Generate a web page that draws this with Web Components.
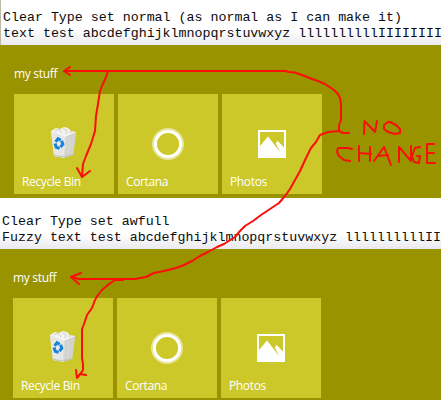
<!DOCTYPE html>
<html lang="en">
<head>
<meta charset="utf-8">
<title>Clear Type comparison</title>
<style>
html, body { margin: 0; }
body { width: 441px; height: 400px; overflow: hidden; background: #999300; }
</style>
</head>
<body>
<compare-board></compare-board>
<script>
class NoteStrip extends HTMLElement {
  connectedCallback() {
    this.attachShadow({ mode: 'open' }).innerHTML = `
      <style>
        :host { display: block; box-sizing: border-box; overflow: hidden;
          background: linear-gradient(to bottom, transparent calc(100% - 15px), #eaeaee) #fff;
          font: 13.3px/16px "Liberation Mono", "Courier New", monospace; color: #0c0c0c; }
        slot { display: block; white-space: pre; }
      </style><slot></slot>`;
  }
}
class TileIcon extends HTMLElement {
  connectedCallback() {
    const art = {
      bin: `<path d="M11 11 36 12 33 35 Q24 39 14 36Z" fill="#e2e2e2"/>
        <path d="M25 16 36 12 33 35 24 38Z" fill="#d2d2ce"/>
        <path d="M11 11 14 36 24 38 25 16Z" fill="#e6e6e6"/>
        <path d="M11 11 16 8 20 9 24 7 28 8 31 11 36 12 25 17Z" fill="#f3f3f1"/>
        <path d="M15 11 19 9 22 13M23 9 27 10 26 14M29 12 32 12" stroke="#cdcfca" fill="none"/>
        <path d="M14 35 Q21 38 33 35" stroke="#b8b7ac" fill="none" stroke-width=".8"/>
        <path d="M25 17 26 25 24 37M28 17 30 24 28 34" stroke="#dedfdc" fill="none" stroke-width=".8"/>
        <g fill="none" stroke="#1583da" stroke-width="3"><path d="M15.6 21.8 18 18.7 20.7 20.3"/><path d="M21.6 20.8 22.8 24.2 20.5 27.2"/><path d="M19.6 28.4 16.3 27.4 15 23.5"/></g>`,
      ring: `<circle cx="24" cy="24" r="14.6" fill="none" stroke="#fff" stroke-opacity=".55" stroke-width="2.8"/>
        <circle cx="24" cy="24" r="12.6" fill="none" stroke="#fff" stroke-width="3"/>`,
      photo: `<path fill="#fff" fill-rule="evenodd" d="M10 10H38V38H10ZM12 12V26L20 16.5 32.3 32.2 27.8 23.5 29.5 20.8 36 27.5V12Z"/>`
    };
    this.attachShadow({ mode: 'open' }).innerHTML = `
      <style>:host { display: block; width: 48px; height: 48px; } svg { display: block; }</style>
      <svg width="48" height="48" viewBox="0 0 48 48">${art[this.getAttribute('kind')]}</svg>`;
  }
}
class StartTile extends HTMLElement {
  connectedCallback() {
    this.attachShadow({ mode: 'open' }).innerHTML = `
      <style>
        :host { display: flex; flex-direction: column; box-sizing: border-box; width: 100px; height: 100px;
          padding: 26px 0 0; background: #ccc829; color: #fff; }
        tile-icon { align-self: center; }
        span { margin: 5px 0 0 8px; font: 12px/17px "Open Sans", sans-serif; letter-spacing: -.36px; white-space: nowrap; }
      </style>
      <tile-icon kind="${this.getAttribute('icon')}"></tile-icon><span><slot></slot></span>`;
  }
}
class TileGroup extends HTMLElement {
  connectedCallback() {
    this.attachShadow({ mode: 'open' }).innerHTML = `
      <style>
        :host { display: block; box-sizing: border-box; background: #999300; overflow: hidden; }
        h2 { margin: 0; height: 29px; font: 12px/18px "Open Sans", sans-serif; letter-spacing: -.3px; color: #fff; }
        div { display: flex; gap: 4px; }
      </style>
      <h2>my stuff</h2>
      <div><start-tile icon="bin">Recycle Bin</start-tile><start-tile icon="ring">Cortana</start-tile><start-tile icon="photo">Photos</start-tile></div>`;
  }
}
class RedMarks extends HTMLElement {
  connectedCallback() {
    this.attachShadow({ mode: 'open' }).innerHTML = `
      <style>:host { position: absolute; inset: 0; pointer-events: none; } svg { display: block; }</style>
      <svg width="441" height="400" fill="none" stroke="#fa0f08" stroke-width="2" stroke-linecap="round" stroke-linejoin="round">
        <path d="M64 71H285L289 72 295 72.5 302 75 312 79 318 81 325 84 334 90 338 94 340 98 341 104V120L339 125 339 131"/>
        <path d="M70 67 64 71 70 75M108 71 106 77 102 86 100 91 98 104 96 116 95 131 91 144 86 156 83 164 82 177"/>
        <path d="M77 168 82 177 90 171"/>
        <path d="M349 133H343L339 131 328 132 320 135 316 142 311 148 306 158 300 171 295 180 290 189 285 196 279 203 270 209 261 215 253 221 245 226 240 231 235 237 224 244 217 247 208 252 200 256 192 261 184 265 176 268 164 271 154 273 146 277 135 279H79L71 277"/>
        <path d="M81 273 71 277 79 284M123 280 115 280 109 284 102 290 98 295 95 300 92 308 87 315 84 324 82 329V358L83 364V370L78 377"/>
        <path d="M76 370 77 378 80 374 86 375"/>
        <path d="M364 134 364.5 121 375 132 377 121M388 122 384 125 384 129 388 132 395 134 400 133V129L396 125 390 122Z"/>
        <path d="M352 149 348 148H338L337 152 339 156 344 160 350 161M359 146V161M359 153 371 154M370 147V161M374 161 384 147 391 165M378 156 388 155M399 162V147L411 161V146M420 147 415 148 412 156 414 162 419 163 420 156H417M434 144H427V163H435M427 153H434"/>
      </svg>`;
  }
}
class CompareBoard extends HTMLElement {
  connectedCallback() {
    this.attachShadow({ mode: 'open' }).innerHTML = `
      <style>
        :host { display: grid; grid-template-rows: 45px 153px 51px 151px; position: relative;
          width: 441px; height: 400px; overflow: hidden; }
        .n1 { padding: 10px 0 0 2px; border-left: 1px solid #bbb9a6; }
        .n2 { padding: 16px 0 0 2px; }
        .g1 { padding: 20px 0 0 14px; }
        .g2 { padding: 20px 0 0 13px; }
      </style>
      <note-strip class="n1">Clear Type set normal (as normal as I can make it)
text test abcdefghijklmnopqrstuvwxyz llllllllllIIIIIIII</note-strip>
      <tile-group class="g1"></tile-group>
      <note-strip class="n2">Clear Type set awfull
Fuzzy text test abcdefghijklmnopqrstuvwxyz llllllllllII</note-strip>
      <tile-group class="g2"></tile-group>
      <red-marks></red-marks>`;
  }
}
customElements.define('note-strip', NoteStrip);
customElements.define('tile-icon', TileIcon);
customElements.define('start-tile', StartTile);
customElements.define('tile-group', TileGroup);
customElements.define('red-marks', RedMarks);
customElements.define('compare-board', CompareBoard);
</script>
</body>
</html>
